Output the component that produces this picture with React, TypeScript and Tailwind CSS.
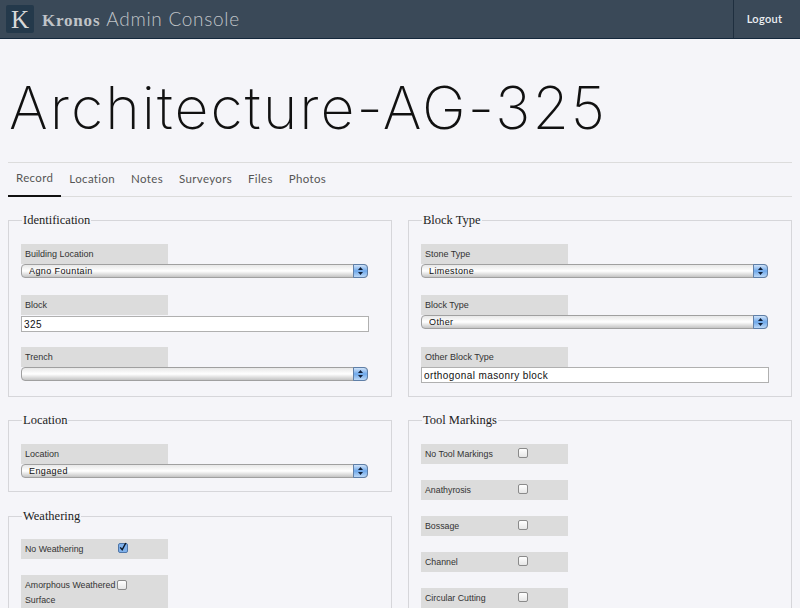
const tabs = ["Record", "Location", "Notes", "Surveyors", "Files", "Photos"];
const toolMarkings = ["No Tool Markings", "Anathyrosis", "Bossage", "Channel", "Circular Cutting"];

function Stepper() {
  return (
    <span className="pointer-events-none absolute right-0 top-0 flex h-[14px] w-[15px] flex-col items-center justify-center gap-[2px] rounded-r-[4px] border border-[#5f7fa8] bg-gradient-to-b from-[#cfe2f8] via-[#6ea8ea] to-[#bcd8f6]">
      <svg width="5" height="3" viewBox="0 0 5 3"><path d="M2.5 0 5 3H0z" fill="#10203a" /></svg>
      <svg width="5" height="3" viewBox="0 0 5 3"><path d="M2.5 3 0 0h5z" fill="#10203a" /></svg>
    </span>
  );
}

function SelectField({ label, value, className }: { label: string; value: string; className?: string }) {
  return (
    <div className={className ?? "mb-[17px]"}>
      <label className="block h-5 w-[147px] bg-[#dcdcdc] pl-1 text-[9px] leading-5 text-[#333]">{label}</label>
      <div className="relative h-[14px] w-[347px]">
        <select
          defaultValue={value}
          className="block h-[14px] w-full appearance-none rounded-[4px] border border-[#a0a0a0] bg-gradient-to-b from-[#e8e8e8] via-[#ffffff] to-[#c4c4c4] pl-[7px] text-[9px] leading-3 tracking-[0.4px] text-[#111] outline-none"
        >
          <option value={value}>{value}</option>
        </select>
        <Stepper />
      </div>
    </div>
  );
}

function TextField({ label, value, flush = false }: { label: string; value: string; flush?: boolean }) {
  return (
    <div className="mb-[15px] last:mb-0">
      <label className="block h-5 w-[147px] bg-[#dcdcdc] pl-1 text-[9px] leading-5 text-[#333]">{label}</label>
      <input
        defaultValue={value}
        className={`block h-4 w-[348px] border border-[#b0b0b0] bg-white pl-[2px] text-[10px] tracking-[0.4px] text-[#111] outline-none ${flush ? "" : "mt-px"}`}
      />
    </div>
  );
}

function CheckRow({ label, checked = false, tall = false }: { label: string; checked?: boolean; tall?: boolean }) {
  return (
    <div className={`mb-4 flex w-[147px] items-start bg-[#dcdcdc] pl-1 text-[8.8px] text-[#333] ${tall ? "h-[36px] pt-[3px] leading-[15px]" : "h-5 leading-5"}`}>
      <span className={tall ? "w-[92px]" : "w-[93px]"}>{label}</span>
      <span
        className={`flex h-[10px] w-[10px] shrink-0 items-center justify-center rounded-[2px] border ${tall ? "mt-[2px]" : "mt-1"} ${checked ? "border-[#4f76a8] bg-[#7fb0ea]" : "border-[#8a8a8a] bg-gradient-to-b from-white to-[#e6e6e6]"}`}
      >
        {checked && (
          <svg width="10" height="12" viewBox="0 0 10 12" className="-mt-[3px]">
            <path d="M1.5 6.5 4 9.5 8.5 1" fill="none" stroke="#0b1726" strokeWidth="1.8" />
          </svg>
        )}
      </span>
    </div>
  );
}

function Group({ title, className, children }: { title: string; className?: string; children: React.ReactNode }) {
  return (
    <fieldset className={`border border-[#d6d6da] px-3 ${className ?? ""}`}>
      <legend className="ml-px px-px font-['Liberation_Serif',serif] text-[12.5px] leading-[14px] text-[#222]">{title}</legend>
      {children}
    </fieldset>
  );
}

export default function App() {
  return (
    <div className="h-[608px] overflow-hidden bg-[#f5f5f9] font-['Liberation_Sans',sans-serif]">
      <header className="flex h-[39px] items-stretch justify-between border-b border-[#14283c] bg-[#3a4958]">
        <div className="flex items-center pl-[6px]">
          <div className="flex h-[28px] w-[28px] items-center justify-center rounded-[2px] bg-[#24394b] font-['Liberation_Serif',serif] text-[25px] leading-none text-[#d8d8d8]">K</div>
          <div className="ml-[8px] text-[#c0c4c8]">
            <span className="font-['Liberation_Serif',serif] text-[17px] font-bold tracking-[0.8px]">Kronos</span>
            <span className="ml-[6px] font-['Lato',sans-serif] text-[19px] font-light tracking-[0.7px]">Admin Console</span>
          </div>
        </div>
        <a className="flex w-[67px] items-center justify-center border-l border-[#1f2f3f] pr-[5px] font-['Lato',sans-serif] text-[11px] font-semibold tracking-[0.3px] text-[#eceff2]">Logout</a>
      </header>

      <main className="px-2">
        <h1 className="mt-[38px] pl-[1px] font-['Inter',sans-serif] text-[59px] font-extralight leading-[61px] tracking-[2px] text-[#111]">Architecture-AG-325</h1>

        <nav className="mt-6 flex h-[35px] border-y border-[#dcdcdc] font-['Lato',sans-serif] text-[11.5px] tracking-[0.35px] text-[#555]">
          {tabs.map((tab, i) => (
            <a key={tab} className={`flex h-[34px] items-center px-2 pb-[3px] ${i === 0 ? "border-b-2 border-[#111]" : ""}`}>{tab}</a>
          ))}
        </nav>

        <div className="mt-4 grid grid-cols-2 items-start gap-x-4">
          <div className="flex flex-col gap-4">
            <Group title="Identification" className="h-[184px] pt-[17px]">
              <SelectField label="Building Location" value="Agno Fountain" />
              <TextField label="Block" value="325" />
              <SelectField label="Trench" value="" />
            </Group>
            <Group title="Location" className="h-[79px] pt-[17px]">
              <SelectField label="Location" value="Engaged" />
            </Group>
            <Group title="Weathering" className="mt-px h-[120px] pt-4">
              <CheckRow label="No Weathering" checked />
              <CheckRow label="Amorphous Weathered Surface" tall />
            </Group>
          </div>
          <div className="flex flex-col gap-4">
            <Group title="Block Type" className="h-[184px] pt-[17px]">
              <SelectField label="Stone Type" value="Limestone" />
              <SelectField label="Block Type" value="Other" className="mb-[18px]" />
              <TextField label="Other Block Type" value="orthogonal masonry block" flush />
            </Group>
            <Group title="Tool Markings" className="h-[220px] pt-[17px]">
              {toolMarkings.map((m) => (
                <CheckRow key={m} label={m} />
              ))}
            </Group>
          </div>
        </div>
      </main>
    </div>
  );
}
